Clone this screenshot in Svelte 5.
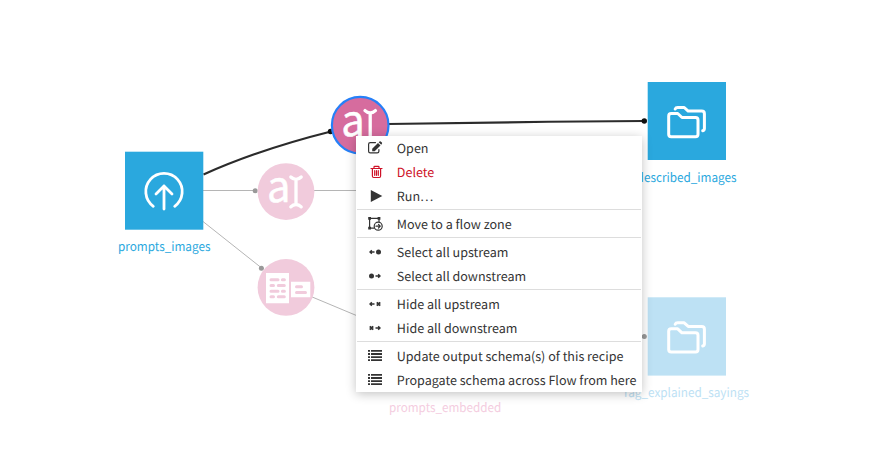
<script>
  const groups = [
    [
      { icon: 'edit', label: 'Open' },
      { icon: 'trash', label: 'Delete', danger: true },
      { icon: 'play', label: 'Run…' }
    ],
    [{ icon: 'zone', label: 'Move to a flow zone' }],
    [
      { icon: 'selUp', label: 'Select all upstream' },
      { icon: 'selDown', label: 'Select all downstream' }
    ],
    [
      { icon: 'hideUp', label: 'Hide all upstream' },
      { icon: 'hideDown', label: 'Hide all downstream' }
    ],
    [
      { icon: 'list', label: 'Update output schema(s) of this recipe' },
      { icon: 'list', label: 'Propagate schema across Flow from here' }
    ]
  ];
</script>

{#snippet prompt(x, y)}
  <g transform="translate({x} {y})">
    <text class="letter" x="-19" y="10.7" textLength="23.500" lengthAdjust="spacingAndGlyphs">a</text>
    <path class="beam" d="M4.8 -14.600c2 2 3.700 2.300 5.200 2.300s3.200 -.3 5.200 -2.300M4.800 15.200c2 -2 3.700 -2.300 5.200 -2.300s3.200 .3 5.200 2.300M10 -12.300v25" />
  </g>
{/snippet}

{#snippet folders(x, y)}
  <g transform="translate({x} {y})" class="folder">
    <path d="M21.500 32.500h6.500l4.300 4h13.500q2.500 0 2.500 2.500v14.200q0 2.500 -2.500 2.500h-24.300q-2.500 0 -2.500 -2.500v-18.200q0 -2.500 2.500 -2.500z" transform="translate(2 -1)" />
    <path d="M27.500 27q.6 -1.500 2.500 -1.500h6.500l4 3.600h13.500q2.700 0 2.700 2.700v14.700q0 1.800 -1.700 2.200" />
  </g>
{/snippet}

<div class="flow">
  <svg class="canvas" width="887" height="463" viewBox="0 0 887 463">
    <g class="links">
      <path d="M203 190.500H255M314 190.500H360M203 221.500L261 267.500M311 296.500L360 317" />
      <circle cx="255.200" cy="190.700" r="2.500" />
      <circle cx="261.400" cy="268.200" r="2.500" />
      <circle cx="644.300" cy="336.600" r="2.500" />
    </g>
    <g class="links active">
      <path d="M203.500 174.500C238 159 285 143 331 131.500M388 124C460 122.500 560 121.500 644 121" />
      <circle cx="330.500" cy="131.500" r="2.700" />
      <circle cx="644.300" cy="121" r="2.700" />
    </g>
    <rect x="125" y="151.700" width="78.300" height="78" fill="#2aa8de" />
    <g class="upload">
      <path d="M153.300 206.300A18.200 18.200 0 1 1 174.700 206.300M164 209V186M156 194L164 186L172 194" />
    </g>
    <rect x="647.700" y="82" width="78.300" height="78" fill="#2aa8de" />
    <rect x="647.700" y="297.300" width="78.300" height="78.300" fill="#bde1f4" />
    {@render folders(647.700, 82)}
    {@render folders(647.700, 297.300)}

    <circle cx="360.200" cy="125.200" r="28.300" fill="#d66c9e" stroke="#2680f8" stroke-width="2.200" />
    <circle cx="286" cy="191.600" r="28.400" fill="#f1cbdc" />
    <circle cx="286" cy="287.400" r="28.400" fill="#f1cbdc" />
    {@render prompt(360.200, 125.200)}
    {@render prompt(286, 191.600)}
    <path fill="#fff" d="M266 273h23v30.300h-23zM291 281.700h19.300v15.600H291z" />
    <path class="cells" d="M271 279.800h7M282.400 279.800h2M271 285.500h2.500M278.300 285.500h6M271 291.200h7M282.400 291.200h2M271 296.800h2.500M278.300 296.800h6M296.500 286.700h5M296.500 292.500h9" />

    <text class="label" x="118" y="251" textLength="92.500" lengthAdjust="spacingAndGlyphs" fill="#2aa8de">prompts_images</text>
    <text class="label" x="636.600" y="182" textLength="100" lengthAdjust="spacingAndGlyphs" fill="#2aa8de">described_images</text>
    <text class="label" x="624" y="397" textLength="125" lengthAdjust="spacingAndGlyphs" fill="#bde1f4">rag_explained_sayings</text>
    <text class="label" x="389" y="412" textLength="112.300" lengthAdjust="spacingAndGlyphs" fill="#f4cde0">prompts_embedded</text>
  </svg>

  <div class="menu">
    {#each groups as group}
      <div class="group">
        {#each group as item}
          <div class="item" class:danger={item.danger}>
            <svg class="icon" width="20" height="20" viewBox="0 0 20 20">
              {#if item.icon === 'edit'}
                <path class="line" d="M10.500 4.600H5.300Q3.600 4.600 3.600 6.300V13.200Q3.600 14.900 5.300 14.900H12.200Q13.900 14.900 13.900 13.200V11.500" />
                <path d="M7.500 12.300V9.800L13.300 4L15.800 6.500L10 12.300zM14 3.300L14.800 2.500Q15.400 2 16 2.500L17.200 3.700Q17.700 4.300 17.200 4.900L16.500 5.800z" transform="translate(-.3 .9)" />
              {:else if item.icon === 'trash'}
                <path class="line" d="M6 6.500H17M9 6.200V5Q9 4.300 9.700 4.300H13.300Q14 4.300 14 5V6.200M7.400 6.500V14Q7.400 15.500 8.700 15.500H14.300Q15.600 15.500 15.600 14V6.500M9.700 8.700V13.300M11.500 8.700V13.300M13.300 8.700V13.300" />
              {:else if item.icon === 'play'}
                <path d="M5.800 4L17.300 10L5.800 16z" />
              {:else if item.icon === 'zone'}
                <path class="line" d="M4.600 4.400H14V7.500M4.600 4.400V14.200H9" />
                <path d="M3.200 3H6v2.800H3.200zM12.600 3h2.800v2.800h-2.800zM3.200 12.800H6v2.800H3.200z" />
                <path class="line" d="M17.200 12.200A4 4 0 1 1 9.200 12.200A4 4 0 1 1 17.200 12.200zM11 12.200H15.200M13.500 10.400L15.300 12.200L13.500 14" />
              {:else if item.icon === 'selUp' || item.icon === 'hideUp'}
                <path class="arrow" d="M5 10H9.500M6.800 8.200L5 10L6.800 11.800" />
                {#if item.icon === 'selUp'}<circle cx="13.500" cy="10" r="2.500" />{:else}<path class="cross" d="M11.800 8.300L15.200 11.700M15.200 8.300L11.800 11.700" />{/if}
              {:else if item.icon === 'selDown' || item.icon === 'hideDown'}
                <path class="arrow" d="M10.500 10H15M13.200 8.200L15 10L13.200 11.800" />
                {#if item.icon === 'selDown'}<circle cx="6.500" cy="10" r="2.500" />{:else}<path class="cross" d="M4.800 8.300L8.200 11.700M8.200 8.300L4.800 11.700" />{/if}
              {:else}
                <path d="M3 4h2v1.800H3zM3 7.100h2v1.800H3zM3 10.200h2v1.800H3zM3 13.300h2v1.800H3zM6 4h11v1.800H6zM6 7.100h11v1.800H6zM6 10.200h11v1.800H6zM6 13.300h11v1.800H6z" />
              {/if}
            </svg>
            <span>{item.label}</span>
          </div>
        {/each}
      </div>
    {/each}
  </div>
</div>

<style>
  :global(body) { margin: 0; background: #fff; }
  .flow {
    position: relative;
    width: 887px;
    height: 463px;
    overflow: hidden;
    font-family: "Noto Sans CJK SC", "Noto Sans", sans-serif;
    text-rendering: geometricPrecision;
  }
  .canvas { display: block; }
  .links path { fill: none; stroke: #b5b5b5; stroke-width: 1; }
  .links circle { fill: #999; }
  .active path { stroke: #2b2b2b; stroke-width: 2.200; }
  .active circle { fill: #111; }
  .upload path, .folder path { fill: none; stroke: #fff; stroke-width: 3; stroke-linecap: round; stroke-linejoin: round; }
  .upload path { stroke-width: 2.800; }
  .beam { fill: none; stroke: #fff; stroke-width: 3.300; stroke-linecap: round; stroke-linejoin: round; }
  .letter { font-size: 43px; font-weight: 400; fill: #fff; stroke: #fff; stroke-width: .5; stroke-linejoin: round; }
  .label { font-size: 12.600px; }
  .cells { fill: none; stroke: #f1cbdc; stroke-width: 3; stroke-linecap: round; }
  .menu {
    position: absolute;
    left: 356px;
    top: 136px;
    width: 286px;
    box-sizing: border-box;
    background: #fff;
    box-shadow: 0 2px 10px rgba(0, 0, 0, .24);
    color: #333;
  }
  .group + .group::before {
    content: "";
    display: block;
    height: 1px;
    margin: 1px 1px 2px;
    background: #ddd;
  }
  .item {
    display: flex;
    align-items: center;
    height: 24px;
    padding-left: 9px;
    font-size: 12.550px;
    line-height: 24px;
    white-space: nowrap;
  }
  .danger { color: #ce1228; }
  .icon { flex: none; margin-right: 11.800px; fill: currentColor; }
  .line { fill: none; stroke: currentColor; stroke-width: 1.200; stroke-linejoin: round; stroke-linecap: round; }
  .arrow { fill: none; stroke: currentColor; stroke-width: 1.400; }
  .cross { fill: none; stroke: currentColor; stroke-width: 1.900; }
</style>
